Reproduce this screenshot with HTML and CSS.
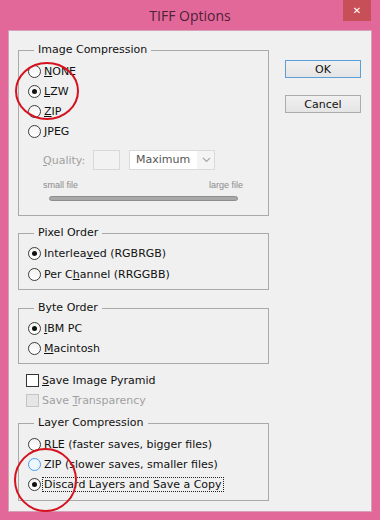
FILE: index.html
```html
<!DOCTYPE html>
<html lang="en">
<head>
    <meta charset="UTF-8">
    <meta name="viewport" content="width=device-width, initial-scale=1.0">
    <title>TIFF Options</title>
    <link rel="stylesheet" href="styles.css">
</head>
<body>

    <div class="window">
        <div class="titlebar">
            <span></span>
            <span class="title">TIFF Options</span>
            <span class="close">&#x2715;</span>
        </div>

        <div class="client">
            <div class="options">
                <fieldset class="group group-compression">
                    <legend>Image Compression</legend>
                    <div class="option"><span class="radio"></span><span><u>N</u>ONE</span></div>
                    <div class="option"><span class="radio checked"></span><span><u>L</u>ZW</span></div>
                    <div class="option"><span class="radio"></span><span><u>Z</u>IP</span></div>
                    <div class="option"><span class="radio"></span><span><u>J</u>PEG</span></div>

                    <div class="quality">
                        <span class="quality-label"><u>Q</u>uality:</span>
                        <span class="quality-input"></span>
                        <span class="select">
                            <span class="select-value">Maximum</span>
                            <svg class="select-arrow" width="9" height="6" viewBox="0 0 9 6">
                                <path d="M1 1 L4.5 4.5 L8 1" fill="none" stroke="#a8a8a8" stroke-width="1.2"/>
                            </svg>
                        </span>
                    </div>
                    <div class="scale"><span>small file</span><span>large file</span></div>
                    <div class="track"></div>
                </fieldset>

                <fieldset class="group group-pixel">
                    <legend>Pixel Order</legend>
                    <div class="option tall"><span class="radio checked"></span><span>Interlea<u>v</u>ed (RGBRGB)</span></div>
                    <div class="option tall"><span class="radio"></span><span>Per C<u>h</u>annel (RRGGBB)</span></div>
                </fieldset>

                <fieldset class="group group-byte">
                    <legend>Byte Order</legend>
                    <div class="option"><span class="radio checked"></span><span><u>I</u>BM PC</span></div>
                    <div class="option"><span class="radio"></span><span><u>M</u>acintosh</span></div>
                </fieldset>

                <div class="checks">
                    <div class="option"><span class="checkbox"></span><span><u>S</u>ave Image Pyramid</span></div>
                    <div class="option disabled"><span class="checkbox"></span><span>Save <u>T</u>ransparency</span></div>
                </div>

                <fieldset class="group group-layer">
                    <legend>Layer Compression</legend>
                    <div class="option"><span class="radio"></span><span>RLE (faster saves, bigger files)</span></div>
                    <div class="option"><span class="radio hover"></span><span>ZIP (slower saves, smaller files)</span></div>
                    <div class="option"><span class="radio checked"></span><span class="focused">Discard Layers and Save a Copy</span></div>
                </fieldset>
            </div>

            <div class="buttons">
                <button class="btn btn-default">OK</button>
                <button class="btn">Cancel</button>
            </div>
        </div>

        <!-- red marks drawn over the dialog -->
        <svg class="marks" width="380" height="520" viewBox="0 0 380 520">
            <ellipse cx="47" cy="91" rx="31" ry="28" fill="none" stroke="#d5121e" stroke-width="2"/>
            <ellipse cx="45.5" cy="480" rx="30.5" ry="31" fill="none" stroke="#d5121e" stroke-width="2"/>
        </svg>
    </div>

</body>
</html>
```

FILE: styles.css
```css
body {
    margin: 0;
    background-color: #e3689a;
    font-family: "DejaVu Sans", Verdana, sans-serif;
    font-size: 11px;
    color: #111;
}

.window {
    position: relative;
    width: 380px;
    height: 520px;
    background-color: #e3689a;
}

.titlebar {
    display: grid;
    grid-template-columns: 1fr auto 1fr;
    height: 30px;
}

.title {
    font-family: "Open Sans", sans-serif;
    font-size: 14px;
    line-height: 31px;
    color: #4e2137;
}

.close {
    justify-self: end;
    align-self: start;
    width: 28px;
    height: 21px;
    margin-right: 9px;
    background-color: #c74f58;
    color: #fff;
    font-size: 10px;
    font-weight: bold;
    line-height: 21px;
    text-align: center;
}

.client {
    display: flex;
    margin: 0 8px;
    padding: 12px 0 0 9px;
    box-sizing: border-box;
    height: 482px;
    background-color: #f0f0f0;
    border: 1px solid #d4a2b8;
}

.options {
    display: flex;
    flex-direction: column;
    width: 251px;
}

/* group boxes */
.group {
    margin: 0;
    padding: 4px 8px 6px 9px;
    border: 1px solid #a9a9a9;
    min-width: 0;
}

.group legend {
    margin-left: 6px;
    padding: 0 4px;
    line-height: 14px;
}

.group-compression {
    padding-bottom: 14px;
}

.group-pixel {
    margin-top: 10px;
    padding-top: 3px;
    padding-bottom: 4px;
}

.group-byte {
    margin-top: 11px;
    padding-top: 3px;
    padding-bottom: 5px;
}

.group-layer {
    margin-top: 6px;
    padding-top: 4px;
    padding-bottom: 6px;
}

.option {
    display: flex;
    align-items: center;
    gap: 3px;
    height: 20px;
    white-space: nowrap;
}

.option.tall {
    height: 21px;
}

.option.disabled {
    color: #a0a0a0;
}

.radio {
    display: flex;
    align-items: center;
    justify-content: center;
    width: 13px;
    height: 13px;
    box-sizing: border-box;
    border: 1px solid #3c3c3c;
    border-radius: 50%;
    background: linear-gradient(#f2f2f2, #ffffff);
}

.radio.checked::after {
    content: "";
    width: 5px;
    height: 5px;
    border-radius: 50%;
    background-color: #111;
}

.radio.hover {
    border-color: #4d9de8;
    background: #eef6fd;
}

.checkbox {
    width: 13px;
    height: 13px;
    box-sizing: border-box;
    border: 1px solid #333;
    background-color: #fff;
}

.disabled .checkbox {
    border-color: #c4c4c4;
    background-color: #e6e6e6;
}

.focused {
    outline: 1px dotted #222;
    outline-offset: 0;
    padding: 0 1px;
    margin-left: -1px;
}

.checks {
    display: flex;
    flex-direction: column;
    margin-top: 6px;
    padding-left: 8px;
}

/* quality controls (disabled) */
.quality {
    display: flex;
    align-items: center;
    margin-top: 9px;
    padding-left: 15px;
    height: 20px;
    color: #a0a0a0;
}

.quality-label {
    width: 50px;
}

.quality-input {
    width: 27px;
    height: 20px;
    box-sizing: border-box;
    border: 1px solid #d9d9d9;
    background-color: #f2f2f2;
}

.select {
    display: flex;
    align-items: center;
    width: 86px;
    height: 20px;
    margin-left: 9px;
    box-sizing: border-box;
    border: 1px solid #dadada;
    background-color: #f4f4f4;
}

.select-value {
    width: 61px;
    height: 18px;
    padding-left: 6px;
    line-height: 18px;
    background-color: #fff;
    color: #555;
}

.select-arrow {
    margin-left: 5px;
}

.scale {
    display: flex;
    justify-content: space-between;
    width: 200px;
    margin: 9px 0 0 15px;
    font-family: "Liberation Sans", Arial, sans-serif;
    font-size: 9px;
    line-height: 12px;
    color: #8a8a8a;
}

.track {
    width: 189px;
    height: 5px;
    margin: 5px 0 0 21px;
    box-sizing: border-box;
    border: 1px solid #8e8e8e;
    border-radius: 3px;
    background-color: #a8a8a8;
}

/* buttons */
.buttons {
    display: flex;
    flex-direction: column;
    gap: 17px;
    margin-left: 16px;
    padding-top: 17px;
}

.btn {
    width: 76px;
    height: 18px;
    padding: 0;
    font-family: "DejaVu Sans", Verdana, sans-serif;
    font-size: 11px;
    color: #111;
    border: 1px solid #acacac;
    background: linear-gradient(#f0f0f0, #e5e5e5);
}

.btn-default {
    border-color: #5c9fd8;
}

.marks {
    position: absolute;
    top: 0;
    left: 0;
    pointer-events: none;
}
```
